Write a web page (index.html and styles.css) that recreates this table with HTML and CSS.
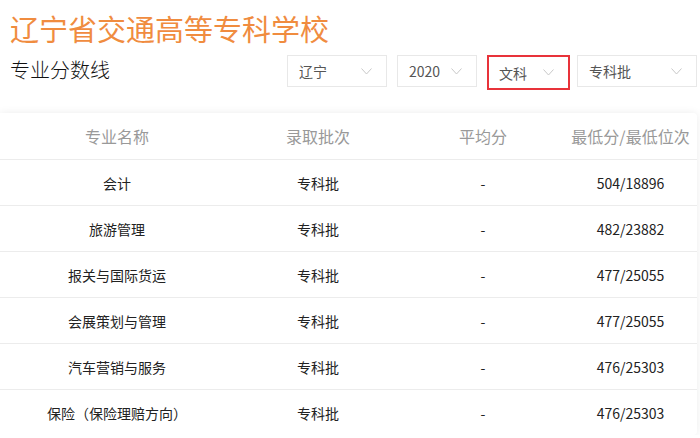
FILE: index.html
```html
<!DOCTYPE html>
<html lang="zh">
<head>
<meta charset="utf-8">
<link rel="stylesheet" href="styles.css">
</head>
<body>
<div class="page">
  <h1 class="title">辽宁省交通高等专科学校</h1>
  <div class="bar">
    <div class="subtitle">专业分数线</div>
    <div class="filters">
      <div class="sel w100"><span>辽宁</span><svg class="chev" width="11" height="7" viewBox="0 0 11 7"><polyline points="0.5,0.5 5.5,6 10.5,0.5" fill="none" stroke="#c8c8c8" stroke-width="1"/></svg></div>
      <div class="sel w80"><span>2020</span><svg class="chev" width="11" height="7" viewBox="0 0 11 7"><polyline points="0.5,0.5 5.5,6 10.5,0.5" fill="none" stroke="#c8c8c8" stroke-width="1"/></svg></div>
      <div class="sel w83 hl"><span>文科</span><svg class="chev" width="11" height="7" viewBox="0 0 11 7"><polyline points="0.5,0.5 5.5,6 10.5,0.5" fill="none" stroke="#c8c8c8" stroke-width="1"/></svg></div>
      <div class="sel w120"><span>专科批</span><svg class="chev" width="11" height="7" viewBox="0 0 11 7"><polyline points="0.5,0.5 5.5,6 10.5,0.5" fill="none" stroke="#c8c8c8" stroke-width="1"/></svg></div>
    </div>
  </div>
  <div class="card">
    <div class="row head">
      <div>专业名称</div><div>录取批次</div><div>平均分</div><div>最低分/最低位次</div>
    </div>
    <div class="row"><div>会计</div><div>专科批</div><div>-</div><div>504/18896</div></div>
    <div class="row"><div>旅游管理</div><div>专科批</div><div>-</div><div>482/23882</div></div>
    <div class="row"><div>报关与国际货运</div><div>专科批</div><div>-</div><div>477/25055</div></div>
    <div class="row"><div>会展策划与管理</div><div>专科批</div><div>-</div><div>477/25055</div></div>
    <div class="row"><div>汽车营销与服务</div><div>专科批</div><div>-</div><div>476/25303</div></div>
    <div class="row"><div>保险（保险理赔方向）</div><div>专科批</div><div>-</div><div>476/25303</div></div>
  </div>
</div>
</body>
</html>
```

FILE: styles.css
```css
* { box-sizing: border-box; }
html, body { margin: 0; padding: 0; background: #fff; }
body {
  font-family: "Noto Sans CJK SC", "Noto Sans", sans-serif;
  color: #333;
  overflow: hidden;
}
.page { width: 700px; }
.title {
  margin: 10px 0 0 10px;
  font-size: 29px;
  line-height: 36px;
  font-weight: 400;
  color: #f08c3f;
}
.bar {
  margin-top: 9px;
  display: flex;
  justify-content: space-between;
  align-items: flex-start;
  padding-left: 10px;
  padding-right: 3px;
}
.subtitle {
  font-size: 20px;
  line-height: 28px;
  font-weight: 300;
  color: #111;
  margin-top: 1px;
}
.filters {
  display: flex;
  gap: 10px;
}
.sel {
  height: 32px;
  border: 1px solid #e8e8e8;
  background: #fff;
  display: flex;
  align-items: center;
  justify-content: space-between;
  padding: 0 14px 0 11px;
  font-size: 14px;
  color: #555;
}
.sel.w100 { width: 100px; }
.sel.w80 { width: 80px; }
.sel.w83 { width: 83px; height: 35px; margin-right: -3px; }
.sel.w120 { width: 120px; }
.sel.hl { border: 2px solid #e8333a; padding-left: 10px; }
.chev { display: block; }
.card {
  margin-top: 23px;
  width: 697px;
  background: #fff;
  border-radius: 0 4px 4px 0;
  box-shadow: 0 0 8px rgba(0, 0, 0, 0.08);
}
.row {
  display: grid;
  grid-template-columns: 234px 168px 162px 1fr;
  height: 46px;
  align-items: center;
  text-align: center;
  border-top: 1px solid #ececec;
  font-size: 14px;
  color: #222;
}
.row.head {
  border-top: none;
  font-size: 16px;
  color: #999;
}
```
